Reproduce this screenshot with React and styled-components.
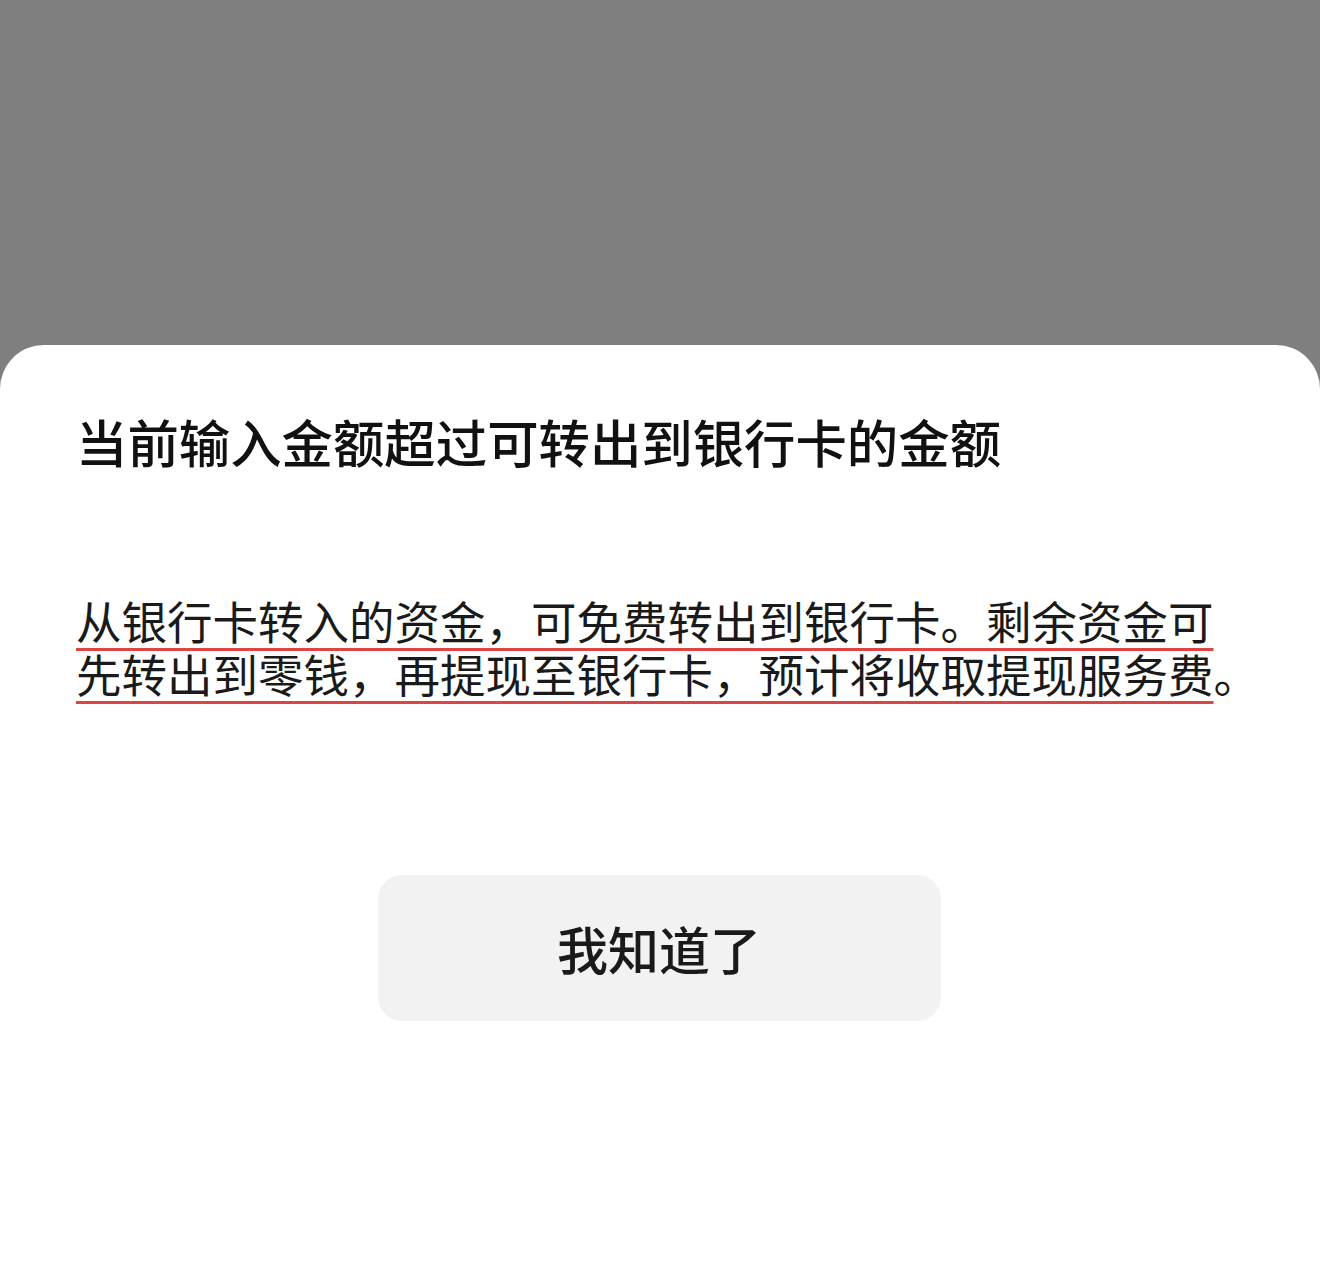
import React from "react";
import styled, { createGlobalStyle } from "styled-components";

const GlobalStyle = createGlobalStyle`
  html, body {
    margin: 0;
    padding: 0;
  }
  body {
    font-family: "Noto Sans CJK SC", "Noto Sans", sans-serif;
    background: #7f7f7f;
  }
`;

const Screen = styled.div`
  width: 1320px;
  min-height: 1280px;
  display: flex;
  flex-direction: column;
  background: #7f7f7f;
`;

const Backdrop = styled.div`
  height: 345px;
  flex-shrink: 0;
`;

const Sheet = styled.div`
  flex: 1;
  background: #fff;
  border-radius: 44px 44px 0 0;
  padding: 60px 77px 0 76px;
  display: flex;
  flex-direction: column;
`;

const Title = styled.h1`
  margin: 0;
  font-size: 51.4px;
  line-height: 72px;
  font-weight: 500;
  color: #111;
  white-space: nowrap;
`;

const Message = styled.p`
  margin: 117px 0 0 0;
  font-size: 45.5px;
  line-height: 53px;
  font-weight: 400;
  color: #1a1a1a;
  white-space: nowrap;
`;

const Marked = styled.span`
  text-decoration: underline;
  text-decoration-color: #dd4444;
  text-decoration-thickness: 3px;
  text-underline-offset: 8px;
`;

const Actions = styled.div`
  display: flex;
  justify-content: center;
  margin-top: 175px;
`;

const ConfirmButton = styled.button`
  width: 563px;
  height: 146px;
  border: none;
  border-radius: 24px;
  background: #f2f2f2;
  color: #1a1a1a;
  font-family: "Noto Sans CJK SC", "Noto Sans", sans-serif;
  font-size: 51px;
  font-weight: 500;
  cursor: pointer;
  margin-left: -1px;
`;

export default function App() {
  return (
    <>
      <GlobalStyle />
      <Screen>
        <Backdrop />
        <Sheet>
          <Title>当前输入金额超过可转出到银行卡的金额</Title>
          <Message>
            <Marked>从银行卡转入的资金，可免费转出到银行卡。剩余资金可</Marked>
            <br />
            <Marked>先转出到零钱，再提现至银行卡，预计将收取提现服务费</Marked>。
          </Message>
          <Actions>
            <ConfirmButton>我知道了</ConfirmButton>
          </Actions>
        </Sheet>
      </Screen>
    </>
  );
}
